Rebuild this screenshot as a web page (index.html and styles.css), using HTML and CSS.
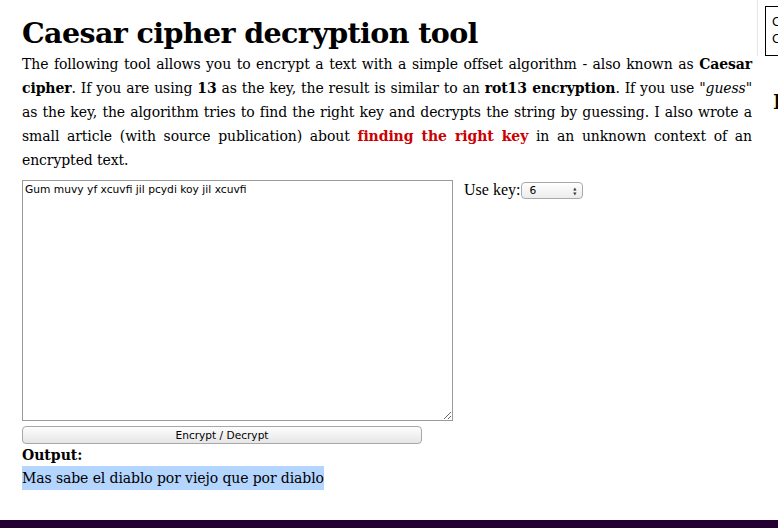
FILE: index.html
```html
<!DOCTYPE html>
<html>
<head>
<meta charset="utf-8">
<title>Caesar cipher decryption tool</title>
<link rel="stylesheet" href="styles.css">
</head>
<body>
<div class="page">
  <div class="main">
    <h1 class="title">Caesar cipher decryption tool</h1>
    <p class="intro">The following tool allows you to encrypt a text with a simple offset algorithm - also known as <b>Caesar cipher</b>. If you are using <b>13</b> as the key, the result is similar to an <b>rot13 encryption</b>. If you use <i>"guess"</i> as the key, the algorithm tries to find the right key and decrypts the string by guessing. I also wrote a small article (with source publication) about <a class="hl" href="#">finding the right key</a> in an unknown context of an encrypted text.</p>
    <div class="tool">
      <div class="tool-left">
        <textarea class="input">Gum muvy yf xcuvfi jil pcydi koy jil xcuvfi</textarea>
        <button class="btn" type="button">Encrypt / Decrypt</button>
        <div class="out-label">Output:</div>
        <div class="out-text"><span class="sel">Mas sabe el diablo por viejo que por diablo</span></div>
      </div>
      <div class="tool-right">
        <span class="key-label">Use key:</span><span class="select"><span class="select-val">6</span><span class="arrows">&#9650;<br>&#9660;</span></span>
      </div>
    </div>
  </div>
  <div class="side">
    <div class="side-top">
      <div class="side-box">Crypto<br>Ciphers</div>
    </div>
    <div class="side-head">Links</div>
  </div>
</div>
<div class="footer"></div>
</body>
</html>
```
FILE: styles.css
```css
html, body {
  margin: 0;
  padding: 0;
  overflow: hidden;
  background: #fff;
}
body {
  font-family: "DejaVu Serif", Georgia, serif;
  color: #000;
  width: 778px;
  height: 528px;
  position: relative;
}
.page {
  display: flex;
  align-items: flex-start;
}
.main {
  width: 730px;
  margin-left: 22px;
  flex-shrink: 0;
}
.title {
  margin: 0;
  padding-top: 14px;
  font-size: 28.5px;
  line-height: 38px;
  font-weight: bold;
  letter-spacing: -0.6px;
}
.intro {
  margin: 0;
  font-size: 14px;
  letter-spacing: -0.1px;
  line-height: 24px;
  text-align: justify;
}
.intro b { font-weight: bold; }
.hl {
  color: #cc0000;
  font-weight: bold;
  text-decoration: none;
}
.tool {
  display: flex;
  margin-top: 8px;
}
.tool-left {
  width: 431px;
  display: flex;
  flex-direction: column;
}
.input {
  box-sizing: border-box;
  width: 431px;
  height: 241px;
  margin: 0;
  border: 1px solid #9a9a9a;
  padding: 2px 2px;
  font-family: "DejaVu Sans", sans-serif;
  font-size: 10.7px;
  line-height: 13px;
  color: #000;
  resize: both;
}
.btn {
  box-sizing: border-box;
  width: 400px;
  height: 18px;
  margin-top: 5px;
  padding: 0;
  border: 1px solid #a8a8a8;
  border-radius: 4px;
  background: linear-gradient(#fdfdfd, #e6e6e6);
  font-family: "DejaVu Sans", sans-serif;
  font-size: 10.6px;
  line-height: 16px;
  color: #000;
}
.out-label {
  font-weight: bold;
  font-size: 14px;
  line-height: 22px;
  margin-top: 0;
}
.out-text {
  font-size: 14px;
  letter-spacing: -0.1px;
  line-height: 24px;
}
.sel {
  background: #b4d5fe;
  display: inline-block;
  line-height: 24px;
}
.tool-right {
  margin-left: 11px;
  display: flex;
  align-items: flex-start;
}
.key-label {
  font-family: "Liberation Serif", "Times New Roman", serif;
  font-size: 16px;
  line-height: 19px;
}
.select {
  box-sizing: border-box;
  display: inline-flex;
  align-items: center;
  justify-content: space-between;
  width: 62px;
  height: 17px;
  margin-top: 2px;
  margin-left: 1px;
  padding: 0 6px 0 7px;
  border: 1px solid #a9a9a9;
  border-radius: 4px;
  background: linear-gradient(#ffffff, #ececec);
  font-family: "DejaVu Sans", sans-serif;
  font-size: 10.7px;
}
.arrows {
  font-size: 4px;
  line-height: 5px;
  color: #333;
  text-align: center;
}
.side {
  width: 200px;
  flex-shrink: 0;
  margin-left: 5px;
}
.side-top {
  border-left: 1px solid #e6e6e6;
  height: 56px;
  padding-left: 7px;
  padding-top: 6px;
  box-sizing: border-box;
}
.side-box {
  border: 1px solid #000;
  height: 50px;
  box-sizing: border-box;
  padding: 7px 6px;
  font-family: "DejaVu Sans", sans-serif;
  font-size: 12px;
  line-height: 17px;
}
.side-head {
  margin-left: 16px;
  margin-top: 34px;
  font-weight: bold;
  font-size: 20px;
}
.footer {
  position: absolute;
  left: 0;
  right: 0;
  bottom: 0;
  height: 8px;
  background: #230031;
}
```
